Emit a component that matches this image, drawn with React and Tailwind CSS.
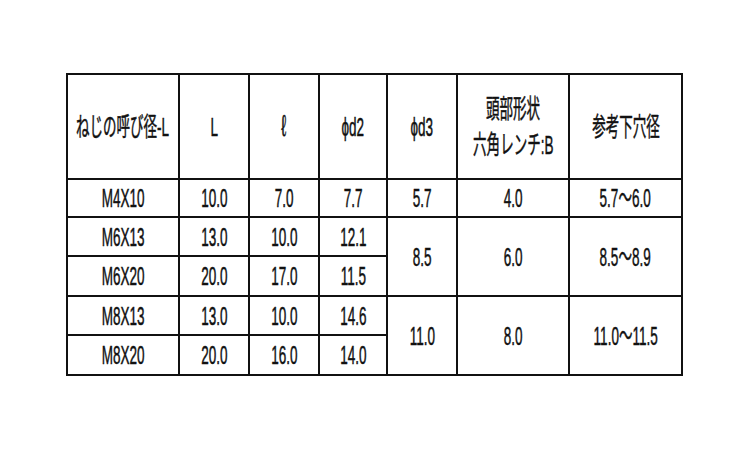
import React from "react";

const T = ({ children }) => (
  <div className="flex justify-center">
    <span className="inline-block whitespace-nowrap scale-x-[0.52] text-[26px] leading-[36px] text-[#111] [-webkit-text-stroke:0.5px_#111]">
      {children}
    </span>
  </div>
);

const cell = "border-2 border-[#111] p-0 align-middle";

const rows = [
  { n: "M4X10", L: "10.0", l: "7.0", d2: "7.7", d3: "5.7", B: "4.0", h: "5.7～6.0", span: 1, ht: "h-[38px]" },
  { n: "M6X13", L: "13.0", l: "10.0", d2: "12.1", d3: "8.5", B: "6.0", h: "8.5～8.9", span: 2, ht: "h-[39px]" },
  { n: "M6X20", L: "20.0", l: "17.0", d2: "11.5", skip: true, ht: "h-[40px]" },
  { n: "M8X13", L: "13.0", l: "10.0", d2: "14.6", d3: "11.0", B: "8.0", h: "11.0～11.5", span: 2, ht: "h-[39px]" },
  { n: "M8X20", L: "20.0", l: "16.0", d2: "14.0", skip: true, ht: "h-[40px]" },
];

export default function App() {
  return (
    <div
      className="w-[750px] h-[450px] bg-white pt-[73px] pl-[66px]"
      style={{ fontFamily: '"Liberation Sans", "Noto Sans CJK JP", sans-serif' }}
    >
      <table className="table-fixed border-collapse w-[615px]">
        <colgroup>
          <col className="w-[112px]" />
          <col className="w-[70px]" />
          <col className="w-[70px]" />
          <col className="w-[68px]" />
          <col className="w-[70px]" />
          <col className="w-[112px]" />
          <col className="w-[113px]" />
        </colgroup>
        <thead>
          <tr className="h-[105px]">
            <th className={`${cell} font-normal`}><T>ねじの呼び径-L</T></th>
            <th className={`${cell} font-normal`}><T>L</T></th>
            <th className={`${cell} font-normal`}>
              <T><span className="text-[30px]">ℓ</span></T>
            </th>
            <th className={`${cell} font-normal`}><T>ϕd2</T></th>
            <th className={`${cell} font-normal`}><T>ϕd3</T></th>
            <th className={`${cell} font-normal`}>
              <T>頭部形状</T>
              <T>六角レンチ:B</T>
            </th>
            <th className={`${cell} font-normal`}><T>参考下穴径</T></th>
          </tr>
        </thead>
        <tbody>
          {rows.map((r) => (
            <tr key={r.n} className={r.ht}>
              <td className={cell}><T>{r.n}</T></td>
              <td className={cell}><T>{r.L}</T></td>
              <td className={cell}><T>{r.l}</T></td>
              <td className={cell}><T>{r.d2}</T></td>
              {!r.skip && (
                <>
                  <td className={cell} rowSpan={r.span}><T>{r.d3}</T></td>
                  <td className={cell} rowSpan={r.span}><T>{r.B}</T></td>
                  <td className={cell} rowSpan={r.span}><T>{r.h}</T></td>
                </>
              )}
            </tr>
          ))}
        </tbody>
      </table>
    </div>
  );
}
